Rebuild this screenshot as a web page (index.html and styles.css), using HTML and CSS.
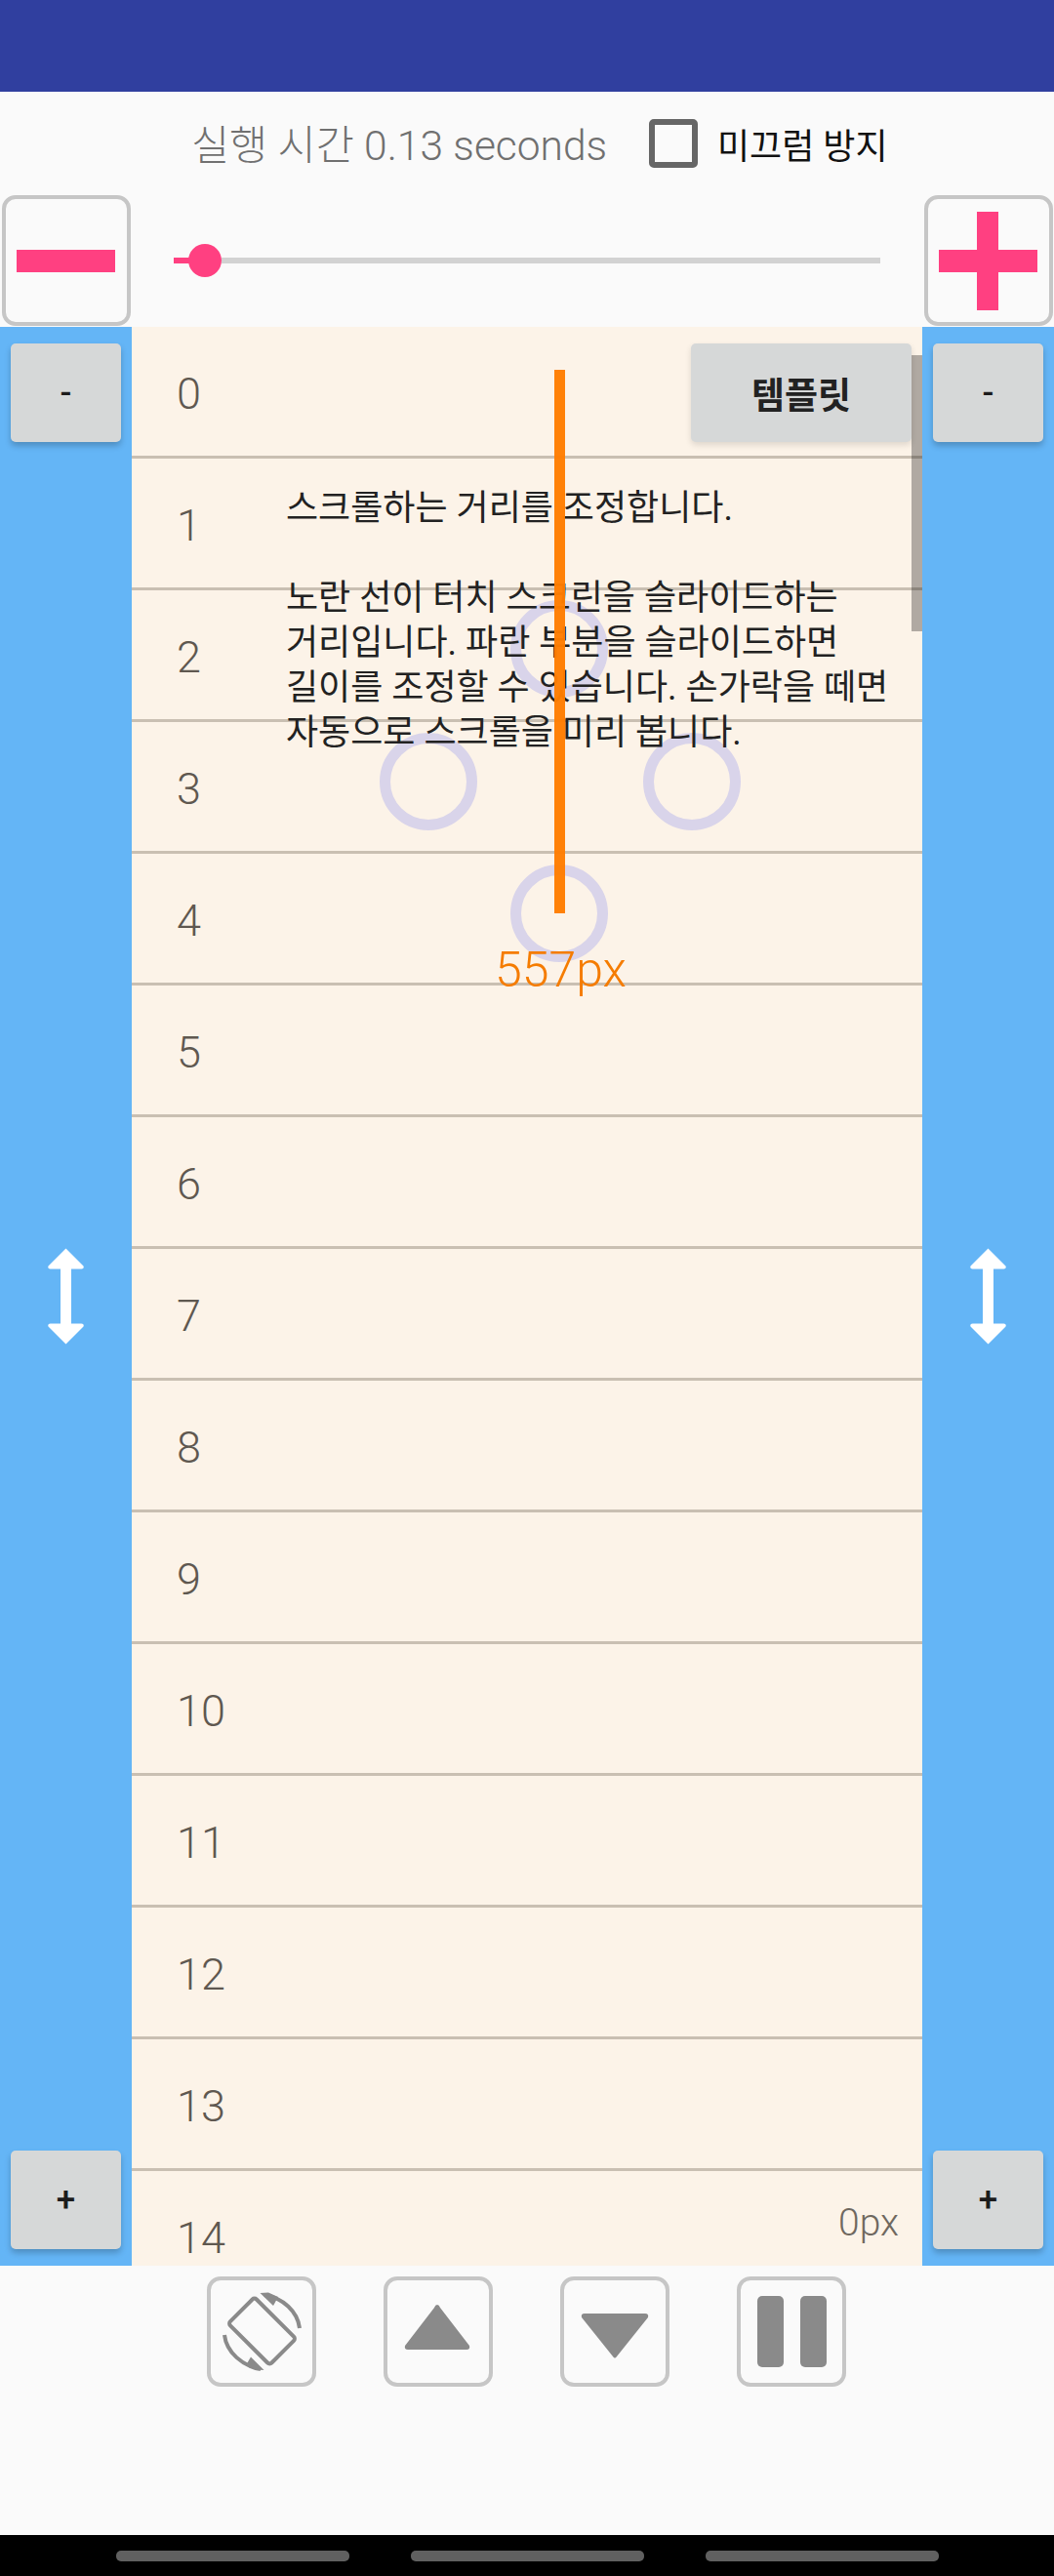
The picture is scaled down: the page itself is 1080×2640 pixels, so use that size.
FILE: index.html
```html
<!DOCTYPE html>
<html lang="ko">
<head>
<meta charset="utf-8">
<title>스크롤</title>
<link rel="stylesheet" href="styles.css">
</head>
<body>
<div class="app">
  <div class="statusbar"></div>
  <div class="toprow">
    <span class="runtime">실행 시간 0.13 seconds</span>
    <span class="checkbox"></span>
    <span class="checklabel">미끄럼 방지</span>
  </div>
  <div class="sliderrow">
    <button class="sqbtn"><span class="bigminus"></span></button>
    <div class="slider">
      <span class="fill"></span><span class="thumb"></span><span class="rest"></span>
    </div>
    <button class="sqbtn">
      <svg class="bigplus" viewBox="0 0 101 101"><path d="M39 0h22v39h40v23H61v39H39V62H0V39h39z"/></svg>
    </button>
  </div>
  <div class="main">
    <div class="side">
      <button class="stepbtn">-</button>
      <svg class="arrow" viewBox="0 0 37 99"><path d="M18.500 0.500 36.500 18.500Q37.500 21.500 34.500 21.500H24V77.500H34.500Q37.500 77.500 36.500 80.500L18.500 98.500 0.500 80.500Q-0.500 77.500 2.500 77.500H13V21.500H2.500Q-0.500 21.500 0.500 18.500Z"/></svg>
      <button class="stepbtn">+</button>
    </div>
    <div class="list">
      <div class="row">0</div>
      <div class="row">1</div>
      <div class="row">2</div>
      <div class="row">3</div>
      <div class="row">4</div>
      <div class="row">5</div>
      <div class="row">6</div>
      <div class="row">7</div>
      <div class="row">8</div>
      <div class="row">9</div>
      <div class="row">10</div>
      <div class="row">11</div>
      <div class="row">12</div>
      <div class="row">13</div>
      <div class="row">14</div>
      <div class="scrollbar"></div>
      <button class="template">템플릿</button>
      <span class="ring ring-top"></span>
      <span class="ring ring-left"></span>
      <span class="ring ring-right"></span>
      <span class="ring ring-bottom"></span>
      <p class="guide">스크롤하는 거리를 조정합니다.<br><br>노란 선이 터치 스크린을 슬라이드하는<br>거리입니다. 파란 부분을 슬라이드하면<br>길이를 조정할 수 있습니다. 손가락을 떼면<br>자동으로 스크롤을 미리 봅니다.</p>
      <span class="orangeline"></span>
      <span class="distance">557px</span>
      <span class="offset">0px</span>
    </div>
    <div class="side">
      <button class="stepbtn">-</button>
      <svg class="arrow" viewBox="0 0 37 99"><path d="M18.500 0.500 36.500 18.500Q37.500 21.500 34.500 21.500H24V77.500H34.500Q37.500 77.500 36.500 80.500L18.500 98.500 0.500 80.500Q-0.500 77.500 2.500 77.500H13V21.500H2.500Q-0.500 21.500 0.500 18.500Z"/></svg>
      <button class="stepbtn">+</button>
    </div>
  </div>
  <div class="controls">
    <button class="ctrl">
      <svg class="ctrlicon" viewBox="11 12 104 105">
        <rect class="phone" x="-30" y="-19" width="60" height="38" rx="3" transform="translate(63.500 64) rotate(45)"/>
        <path class="arcline" d="M66 27C85 30 100 44 102 61"/>
        <path class="archead" d="M61.500 25 75 38 80 29 70 24.500Z"/>
        <path class="arcline" d="M25 68C27 86 44 100 62 103"/>
        <path class="archead" d="M65.500 104 52 90.500 47 99 57 103.500Z"/>
      </svg>
    </button>
    <button class="ctrl">
      <svg class="ctrlicon" viewBox="0 0 104 105"><path class="solid" d="M51 25Q53 25 54 28L84 67Q85 71 81 71H21Q17 71 18 67L48 28Q49 25 51 25Z"/></svg>
    </button>
    <button class="ctrl">
      <svg class="ctrlicon" viewBox="0 0 104 105"><path class="solid" d="M21 34H83Q87 34 86 38L54 78Q52 81 50 78L18 38Q17 34 21 34Z"/></svg>
    </button>
    <button class="ctrl ctrl-pause">
      <span class="pausebar"></span><span class="pausebar"></span>
    </button>
  </div>
  <div class="spacer"></div>
  <div class="navbar">
    <span class="pill"></span><span class="pill"></span><span class="pill"></span>
  </div>
</div>
</body>
</html>
```
FILE: styles.css
```css
* { box-sizing: border-box; }
html, body { margin: 0; padding: 0; background: #fafafa; }
button { padding: 0; margin: 0; font: inherit; }
.app {
  width: 1080px;
  height: 2640px;
  display: flex;
  flex-direction: column;
  font-family: Roboto, "Noto Sans CJK KR", sans-serif;
  overflow: hidden;
}
.statusbar { height: 94px; background: #303f9f; flex: none; }
.toprow {
  height: 106px;
  flex: none;
  display: flex;
  align-items: center;
  padding: 0 0 0 196px;
}
.runtime { font-size: 42.500px; font-weight: 300; color: #707070; white-space: nowrap; width: 469px; margin-bottom: 3px; }
.checkbox { width: 50px; height: 50px; border: 6px solid #666; border-radius: 5px; flex: none; }
.checklabel { font-size: 36px; color: #111; margin-left: 20px; white-space: nowrap; }
.sliderrow { height: 135px; flex: none; display: flex; padding: 0 1.500px 1px; }
.sqbtn {
  width: 132px;
  height: 134px;
  flex: none;
  background: #fafafa;
  border: 4px solid #c6c6c6;
  border-radius: 14px;
  display: flex;
  align-items: center;
  justify-content: center;
}
.bigminus { display: block; width: 101px; height: 23px; background: #ff4081; }
.bigplus { width: 101px; height: 101px; fill: #ff4081; display: block; }
.slider { flex: 1; margin: 0 44.500px; display: flex; align-items: center; }
.fill { width: 16px; height: 6px; background: #ff4081; flex: none; }
.thumb { width: 34px; height: 34px; border-radius: 50%; background: #ff4081; flex: none; margin-left: -1px; }
.rest { flex: 1; height: 6px; background: #d2d2d2; }
.main { height: 1987px; flex: none; display: flex; }
.side {
  width: 135px;
  flex: none;
  background: #64b5f6;
  display: flex;
  flex-direction: column;
  justify-content: space-between;
  align-items: center;
  padding: 17px 0;
}
.stepbtn {
  width: 113px;
  height: 101px;
  border: 0;
  border-radius: 5px;
  background: #d6d8d8;
  color: #1c1c1c;
  font-size: 35px;
  font-weight: 500;
  box-shadow: 0 4px 6px rgba(0, 0, 0, .22);
}
.arrow { width: 37px; height: 99px; fill: #fff; display: block; }
.list { flex: 1; position: relative; background: #fcf3e8; overflow: hidden; }
.row {
  height: 135px;
  border-bottom: 3px solid #c9bfb2;
  font-size: 45px;
  font-weight: 300;
  color: #5f5850;
  display: flex;
  align-items: center;
  padding: 5px 0 0 46px;
}
.scrollbar { position: absolute; right: 0; top: 29px; width: 11px; height: 283px; background: rgba(0, 0, 0, .3); }
.template {
  position: absolute;
  top: 17px;
  right: 11px;
  width: 226px;
  height: 101px;
  border: 0;
  border-radius: 5px;
  background: #d6d8d8;
  color: #222;
  font-size: 37px;
  font-weight: 700;
  box-shadow: 0 3px 6px rgba(0, 0, 0, .12);
}
.ring {
  position: absolute;
  width: 100px;
  height: 100px;
  border: 11px solid #d9d4ea;
  border-radius: 50%;
}
.ring-top { left: 388px; top: 280px; }
.ring-left { left: 254px; top: 416px; }
.ring-right { left: 524px; top: 416px; }
.ring-bottom { left: 388px; top: 551px; }
.guide {
  position: absolute;
  left: 158px;
  top: 163px;
  margin: 0;
  font-size: 36px;
  line-height: 46px;
  color: #222;
  white-space: nowrap;
}
.orangeline { position: absolute; left: 433px; top: 44px; width: 11px; height: 557px; background: rgba(255, 125, 0, .97); }
.distance {
  position: absolute;
  left: 372px;
  top: 631px;
  font-size: 50px;
  font-weight: 300;
  line-height: 56px;
  color: #f57c00;
}
.offset {
  position: absolute;
  right: 24px;
  top: 1921px;
  font-size: 39px;
  font-weight: 300;
  line-height: 44px;
  color: #6f685f;
}
.controls {
  height: 124px;
  flex: none;
  display: flex;
  justify-content: center;
  gap: 69px;
  padding: 11px 0 0;
  margin-left: -1px;
}
.ctrl {
  width: 112px;
  height: 113px;
  flex: none;
  background: #fafafa;
  border: 4px solid #c6c6c6;
  border-radius: 14px;
  padding: 0;
  display: flex;
  align-items: center;
  justify-content: center;
}
.ctrlicon { width: 104px; height: 105px; display: block; }
.phone { fill: none; stroke: #8a8a8a; stroke-width: 4; }
.arcline { fill: none; stroke: #8a8a8a; stroke-width: 4; }
.archead { fill: #8a8a8a; }
.solid { fill: #8a8a8a; }
.ctrl-pause { gap: 17px; }
.pausebar { width: 27px; height: 73px; border-radius: 5px; background: #8a8a8a; }
.spacer { flex: 1; }
.navbar {
  height: 42px;
  flex: none;
  background: #000;
  display: flex;
  justify-content: center;
  gap: 63px;
  padding-top: 16px;
}
.pill { width: 239px; height: 11px; border-radius: 5px; background: #606060; }
```
